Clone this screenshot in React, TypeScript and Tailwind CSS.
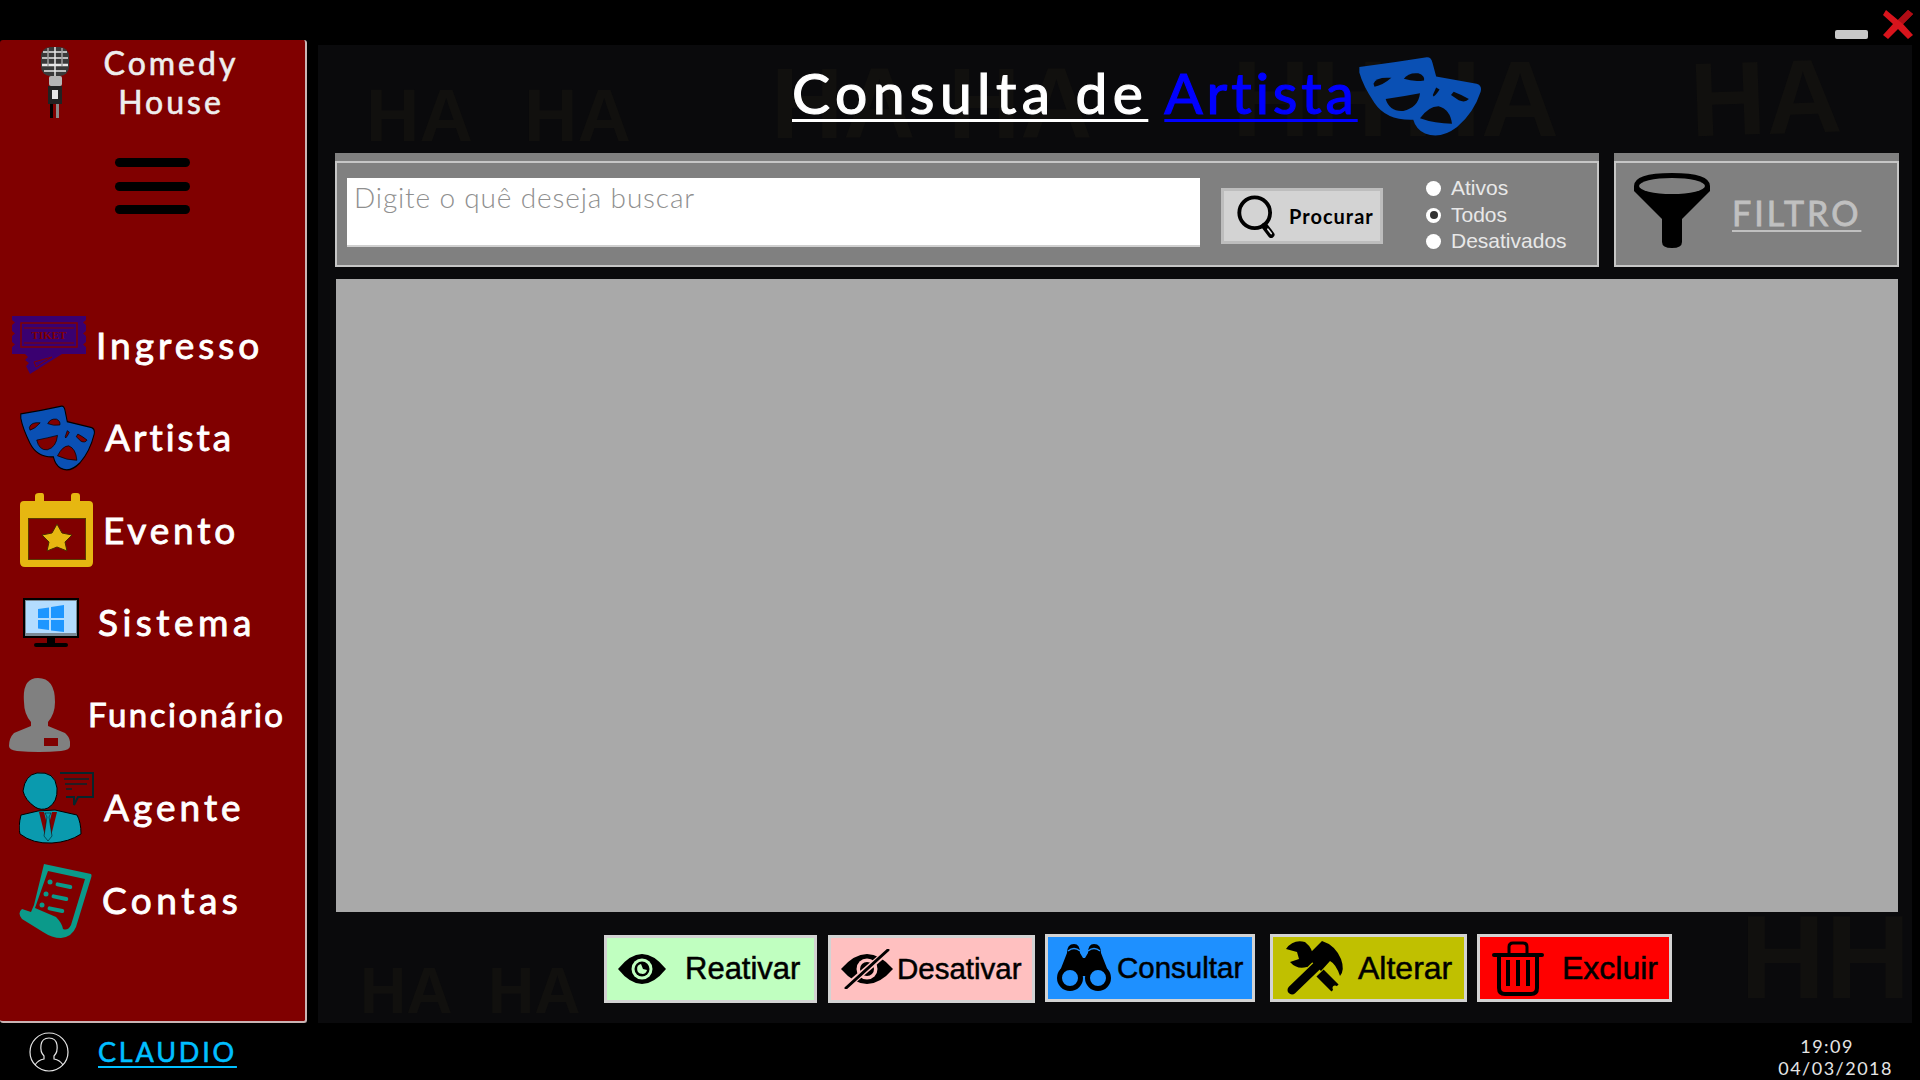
const display = "font-['Lato',sans-serif]";

function Masks({ className, hole, outline }: { className: string; hole: string; outline?: boolean }) {
  return (
    <svg viewBox="26 14 368 252" preserveAspectRatio="none" className={className} aria-hidden>
      <path
        d="M30 48Q130 35 230 18Q243 17 247 35L258 78L378 100Q395 105 390 125Q370 190 320 235Q270 275 225 255Q198 242 190 212Q110 215 75 160Q40 105 30 65Z"
        fill="#0a50b4"
        stroke={outline ? "#000" : "none"}
        strokeWidth="5"
      />
      <g fill={hole} stroke={outline ? "#000" : "none"} strokeWidth="3">
        <path d="M72 100Q80 78 125 82Q100 105 75 110Z" />
        <path d="M162 85Q175 65 205 68Q225 75 222 90Q190 95 162 85Z" />
        <path d="M108 148Q160 140 210 130Q205 175 160 185Q120 188 108 148Z" />
        <path d="M248 135L258 112L268 118Q258 135 250 140Z" />
        <path d="M302 135L310 125Q335 135 355 148Q345 160 325 152Z" />
        <path d="M210 208Q235 170 265 170Q300 180 305 225Q255 225 210 208Z" />
      </g>
    </svg>
  );
}

function Mic() {
  return (
    <svg viewBox="0 0 30 72" className="h-[72px] w-[30px]" aria-hidden>
      <rect x="1" y="1" width="28" height="29" rx="9" fill="#3a3a3a" />
      <g stroke="#e8e8e8" strokeWidth="1.500">
        <path d="M3 6H27M2 12H28M4 25H26M15 1V30" />
        <path d="M2 19H28" strokeWidth="2.500" />
        <path d="M8 2V20M22 2V20" stroke="#a0a0a0" />
      </g>
      <rect x="9" y="30" width="13" height="10" rx="2" fill="#b5b5b5" />
      <rect x="8" y="40" width="14" height="18" fill="#222" />
      <rect x="12" y="44" width="6" height="9" fill="#e6e6e6" />
      <rect x="10" y="58" width="3" height="14" fill="#000" />
      <rect x="16" y="58" width="3" height="14" fill="#8a8a8a" />
    </svg>
  );
}

function Ticket() {
  return (
    <svg viewBox="0 0 74 58" className="h-[58px] w-[74px]" aria-hidden>
      <path
        d="M0 0H74V4L71 6.500L74 9V15L71 17.500L74 20V26L71 28.500L74 31V38H50L18 58L14 50L17 47L13 44L16 41L13 38H0V31L3 28.500L0 26V20L3 17.500L0 15V9L3 6.500L0 4Z"
        fill="#3a0070"
      />
      <rect x="9" y="7" width="56" height="24" fill="none" stroke="#800000" strokeWidth="1.500" />
      <path d="M12 12H62M12 27H62" stroke="#800000" strokeWidth="1" />
      <text x="37" y="23" textAnchor="middle" fontSize="11" fontWeight="700" fontFamily="Liberation Serif, serif" fill="#800000">
        TIKET
      </text>
      <path d="M22 46L40 41L24 51Z" fill="none" stroke="#800000" strokeWidth="1" />
    </svg>
  );
}

function Calendar() {
  return (
    <svg viewBox="0 0 74 74" className="h-[74px] w-[74px]" aria-hidden>
      <path
        d="M15 8V3Q15 0 19 0H22Q24 0 24 3V8H51V3Q51 0 54 0H57Q60 0 60 3V8H69Q73 8 73 12V69Q73 74 68 74H5Q0 74 0 69V12Q0 8 4 8Z"
        fill="#e6b711"
      />
      <rect x="8.500" y="25.500" width="57" height="41" fill="#800000" stroke="#5a3a00" strokeWidth="1" />
      <path
        d="M37 31L42 40L52 42L45 49L47 58L37 54L27 58L29 49L22 42L32 40Z"
        fill="#e6b711"
        stroke="#4a2a00"
        strokeWidth="1"
        strokeLinejoin="round"
      />
    </svg>
  );
}

function Monitor() {
  return (
    <svg viewBox="0 0 56 49" className="h-[49px] w-[56px]" aria-hidden>
      <rect x="0" y="0" width="56" height="40" fill="#000" />
      <rect x="2" y="2" width="52" height="36" fill="#7a8a96" />
      <rect x="3" y="3" width="50" height="32" fill="#b3dcff" />
      <path d="M15 11L26 9.500V20H15ZM28 9L41 7V20H28ZM15 22H26V32L15 30.500ZM28 22H41V34L28 32.500Z" fill="#1e96ff" />
      <rect x="24" y="40" width="8" height="5" fill="#000" />
      <rect x="11" y="45" width="34" height="4" rx="2" fill="#000" />
    </svg>
  );
}

function Employee() {
  return (
    <svg viewBox="0 0 61 74" className="h-[74px] w-[61px]" aria-hidden>
      <path
        d="M15 24Q13 0 29 0Q46 0 46 24Q46 36 39 44V48L56 55Q62 60 61 68Q61 72 52 73Q30 75 8 73Q0 72 0 68Q0 60 5 55L22 48V44Q15 36 15 24Z"
        fill="#808080"
      />
      <rect x="35" y="60" width="14" height="8" fill="#800000" />
    </svg>
  );
}

function Agent() {
  return (
    <svg viewBox="0 0 75 72" className="h-[72px] w-[75px]" aria-hidden>
      <path d="M41 1H74V25H59L55 33V25H47" fill="#800000" stroke="#06262c" strokeWidth="2" />
      <path d="M45 7H70M46 12H68M47 17H53" stroke="#06262c" strokeWidth="1.500" />
      <path d="M18 1Q36 -1 38 16Q39 30 29 36Q22 39 16 35Q6 28 4 19Q6 3 18 1Z" fill="#0a9aae" stroke="#000" strokeWidth="1" />
      <path d="M19 39L2 43Q-1 55 1 62Q14 72 33 71Q50 70 62 62Q62 50 58 43L36 38Z" fill="#0a9aae" stroke="#000" strokeWidth="1" />
      <path d="M20 40L26 64L32 64L38 40L33 40L29 56L25 40Z" fill="#800000" />
      <path d="M26 41H32L30 45L33 64L29 69L25 64L28 45Z" fill="#0a9aae" stroke="#000" strokeWidth="0.500" />
    </svg>
  );
}

function Bill() {
  return (
    <svg viewBox="0 0 74 75" className="h-[75px] w-[74px]" aria-hidden>
      <path d="M26 1L73 11Q74 12 73 15L58 64Q54 74 43 75Q34 75 25 69L4 56Q-1 50 4 46L13 49L16 42Z" fill="#0b9a8a" />
      <path d="M30 8L67 16L53 62Q50 68 45 66Q44 60 38 54L17 45Z" fill="#800000" />
      <g fill="#0b9a8a">
        <circle cx="32" cy="19" r="2.500" />
        <circle cx="28" cy="31" r="2.500" />
        <circle cx="24" cy="42" r="2.500" />
        <rect x="38" y="19" width="17" height="4" rx="2" transform="rotate(12 38 19)" />
        <rect x="34" y="31" width="17" height="4" rx="2" transform="rotate(12 34 31)" />
        <rect x="30" y="43" width="17" height="4" rx="2" transform="rotate(12 30 43)" />
      </g>
    </svg>
  );
}

function UserRing() {
  return (
    <svg viewBox="0 0 40 40" className="h-[40px] w-[40px]" fill="none" stroke="#e5e5e5" strokeWidth="1.200" aria-hidden>
      <circle cx="20" cy="20" r="19" />
      <path d="M6 33Q9 28 15 27V24Q11 20 12 13Q13 6 20 6Q27 6 28 13Q29 20 25 24V27Q31 28 34 33" />
    </svg>
  );
}

function SearchGlass() {
  return (
    <svg viewBox="0 0 40 40" className="h-[44px] w-[44px]" fill="none" aria-hidden>
      <circle cx="17" cy="17" r="14" stroke="#000" strokeWidth="3.500" />
      <path d="M26 29L32 37" stroke="#000" strokeWidth="6" strokeLinecap="round" />
      <path d="M29 32L32 36" stroke="#ddd" strokeWidth="1.500" strokeLinecap="round" />
    </svg>
  );
}

function Funnel() {
  return (
    <svg viewBox="0 0 76 75" className="h-[75px] w-[76px]" aria-hidden>
      <path d="M0 13Q0 0 38 0Q76 0 76 13V18L48 46V69Q48 75 38 75Q28 75 28 69V46L0 18Z" fill="#000" />
      <ellipse cx="38" cy="13" rx="33" ry="8" fill="#808080" />
    </svg>
  );
}

function Eye() {
  return (
    <svg viewBox="0 0 48 30" className="h-[30px] w-[48px]" aria-hidden>
      <path d="M0 15Q12 0 24 0Q36 0 48 15Q36 30 24 30Q12 30 0 15Z" fill="#000" />
      <circle cx="24" cy="15" r="10.500" fill="#c0ffc0" />
      <circle cx="24" cy="15" r="7.500" fill="#000" />
      <path d="M23 10A5 5 0 1 0 29 16L25 15Z" fill="#c0ffc0" />
    </svg>
  );
}

function EyeOff() {
  return (
    <svg viewBox="0 0 52 40" className="h-[40px] w-[52px]" aria-hidden>
      <path d="M0 20Q13 5 26 5Q39 5 52 20Q39 35 26 35Q13 35 0 20Z" fill="#000" />
      <circle cx="26" cy="20" r="10.500" fill="#ffc0c0" />
      <circle cx="26" cy="20" r="7" fill="#000" />
      <path d="M5 38L47 2" stroke="#ffc0c0" strokeWidth="6" />
      <path d="M5 39L47 1" stroke="#000" strokeWidth="3" strokeLinecap="round" />
    </svg>
  );
}

function Binoculars() {
  return (
    <svg viewBox="0 0 56 48" className="h-[48px] w-[56px]" aria-hidden>
      <path d="M11 9Q11 0 18 0Q24 0 24 9L27 14H29L32 9Q32 0 38 0Q45 0 45 9L54 32H2Z" fill="#000" />
      <path d="M12 7Q18 2 24 7M32 7Q38 2 44 7" stroke="#1e90ff" strokeWidth="1.500" fill="none" />
      <circle cx="14" cy="34" r="10.500" fill="#1e90ff" stroke="#000" strokeWidth="5" />
      <circle cx="42" cy="34" r="10.500" fill="#1e90ff" stroke="#000" strokeWidth="5" />
    </svg>
  );
}

function Tools() {
  return (
    <svg viewBox="0 0 60 56" className="h-[56px] w-[60px]" aria-hidden>
      <path d="M20 2Q8 -1 1 9L12 12L14 19L5 22Q12 30 22 27L28 22Q30 10 20 2Z" fill="#000" />
      <path d="M24 22L50 48" stroke="#000" strokeWidth="10" />
      <circle cx="50" cy="48" r="2.500" fill="#c0c000" />
      <path d="M8 50L35 24" stroke="#c0c000" strokeWidth="13" />
      <path d="M7 50L35 23" stroke="#000" strokeWidth="9" strokeLinecap="round" />
      <path d="M27 11L37 1Q50 5 56 19Q60 30 55 36Q51 24 45 21L36 31L22 17Z" fill="#000" />
    </svg>
  );
}

function Trash() {
  return (
    <svg viewBox="0 0 52 56" className="h-[56px] w-[52px]" fill="none" stroke="#000" aria-hidden>
      <path d="M2 15H50" strokeWidth="4" strokeLinecap="round" />
      <path d="M17 14V7Q17 3 21 3H31Q35 3 35 7V14" strokeWidth="3" />
      <path d="M7 15V48Q7 54 13 54H39Q45 54 45 48V15" strokeWidth="4" />
      <path d="M16 20V46M26 20V46M36 20V46" strokeWidth="4" />
    </svg>
  );
}

const navItems = [
  { label: "Ingresso", icon: <Ticket />, row: "pl-[12px] gap-[10px]", text: "text-[37px] tracking-[4px]" },
  { label: "Artista", icon: <Masks className="h-[66px] w-[75px]" hole="#800000" outline />, row: "pl-[20px] gap-[10px]", text: "text-[37px] tracking-[3px]" },
  { label: "Evento", icon: <Calendar />, row: "pl-[20px] gap-[9px]", text: "text-[37px] tracking-[3.800px]" },
  { label: "Sistema", icon: <Monitor />, row: "pl-[23px] gap-[19px]", text: "text-[37px] tracking-[4.500px]" },
  { label: "Funcionário", icon: <Employee />, row: "pl-[9px] gap-[18px]", text: "text-[33px] tracking-[2.500px]" },
  { label: "Agente", icon: <Agent />, row: "pl-[19px] gap-[10px]", text: "text-[37px] tracking-[4px]" },
  { label: "Contas", icon: <Bill />, row: "pl-[18px] gap-[10px]", text: "text-[37px] tracking-[4.500px]" },
];

const radios = [
  { label: "Ativos", cls: "h-[28px]", checked: false },
  { label: "Todos", cls: "h-[26px]", checked: true },
  { label: "Desativados", cls: "h-[26px]", checked: false },
];

const actions = [
  { label: "Reativar", icon: <Eye />, box: "w-[213px] h-[68px] mt-[1px] bg-[#c0ffc0] pl-[11px]", text: "ml-[19px] text-[31px]" },
  { label: "Desativar", icon: <EyeOff />, box: "w-[207px] h-[68px] mt-[1px] ml-[11px] bg-[#ffc0c0] pl-[10px]", text: "ml-[4px] text-[29.500px]" },
  { label: "Consultar", icon: <Binoculars />, box: "w-[210px] h-[68px] ml-[10px] bg-[#1e90ff] pl-[8px]", text: "ml-[5px] text-[29.500px]" },
  { label: "Alterar", icon: <Tools />, box: "w-[197px] h-[68px] ml-[15px] bg-[#c0c000] pl-[12px]", text: "ml-[13px] text-[32px]" },
  { label: "Excluir", icon: <Trash />, box: "w-[195px] h-[68px] ml-[10px] bg-[#ff0000] pl-[12px]", text: "ml-[18px] text-[32px]" },
];

const laughs = [
  { text: "HA", cls: "left-[48px] top-[34px] text-[74px]" },
  { text: "HA", cls: "left-[206px] top-[34px] text-[74px]" },
  { text: "HA", cls: "left-[453px] top-[8px] text-[100px]" },
  { text: "HA", cls: "left-[630px] top-[8px] text-[100px]" },
  { text: "HH", cls: "left-[914px] top-0 text-[108px]" },
  { text: "HA", cls: "left-[1085px] top-0 text-[108px]" },
  { text: "HA", cls: "left-[1372px] top-0 text-[105px] -rotate-2" },
  { text: "HA", cls: "left-[42px] top-[914px] text-[64px]" },
  { text: "HA", cls: "left-[170px] top-[914px] text-[64px]" },
  { text: "HH", cls: "left-[1422px] top-[853px] text-[118px]" },
];

export default function App() {
  return (
    <div className={`h-[1080px] w-[1920px] overflow-hidden bg-black ${display}`}>
      <div className="flex h-[40px] items-start justify-end">
        <div className="mt-[30px] h-[9px] w-[33px] rounded-[2px] bg-[#c8c8c8]" />
        <svg viewBox="0 0 30 29" className="ml-[15px] mr-[7px] mt-[10px] h-[29px] w-[30px]" aria-hidden>
          <path d="M3 0L15 10L25 0L30 4L20 14L30 25L25 29L15 19L5 29L0 25L10 14L0 5Z" fill="#d8141c" />
          <path d="M15 10L25 0L30 4L20 14Z" fill="#b00c14" />
        </svg>
      </div>

      <div className="flex h-[983px]">
        <aside className="h-[983px] w-[307px] shrink-0 rounded-[3px] border-b-2 border-r-2 border-[#c9b4b4] bg-[#800000]">
          <div className="flex h-[80px] pl-[40px]">
            <div className="mt-[6px]">
              <Mic />
            </div>
            <div className="ml-[32px] mt-[3px] w-[138px] whitespace-nowrap text-center text-[32px] leading-[39px] tracking-[3px] text-[#eeeeee] [-webkit-text-stroke:0.6px_#eeeeee]">
              Comedy
              <br />
              House
            </div>
          </div>
          <div className="ml-[115px] mt-[38px] flex w-[75px] flex-col gap-[14.500px]">
            <div className="h-[9px] rounded-full bg-black" />
            <div className="h-[9px] rounded-full bg-black" />
            <div className="h-[9px] rounded-full bg-black" />
          </div>
          <nav className="mt-[85px]">
            {navItems.map((item) => (
              <div key={item.label} className={`flex h-[92.500px] items-center ${item.row}`}>
                {item.icon}
                <span className={`-mt-[2px] whitespace-nowrap text-white [-webkit-text-stroke:0.9px_white] ${item.text}`}>
                  {item.label}
                </span>
              </div>
            ))}
          </nav>
        </aside>

        <main className="relative ml-[11px] mt-[5px] h-[978px] w-[1594px] overflow-hidden bg-[#0a0a0c] pl-[17px]">
          {laughs.map((l, i) => (
            <span
              key={i}
              className={`absolute select-none font-['Liberation_Sans',sans-serif] font-bold leading-none text-[#11100e] ${l.cls}`}
            >
              {l.text}
            </span>
          ))}

          <div className="relative">
            <div className="flex h-[108px] items-start pl-[457px]">
              <h1 className="mt-[12px] whitespace-nowrap text-[57px] leading-[70px] tracking-[5.400px] text-white underline decoration-[3px] underline-offset-[5px] [-webkit-text-stroke:1.200px_white]">
                Consulta de
              </h1>
              <span className="ml-[16px] mt-[12px] whitespace-nowrap text-[57px] leading-[70px] tracking-[3.800px] text-[#0000ff] underline decoration-[3px] underline-offset-[5px] [-webkit-text-stroke:1.200px_#0000ff]">
                Artista
              </span>
              <Masks className="mt-[11px] h-[81px] w-[124px]" hole="#0a0a0c" />
            </div>

            <div className="flex gap-[15px]">
              <div className="h-[114px] w-[1264px] bg-[#808080] pt-[8px]">
                <div className="flex h-[106px] items-start border-2 border-[#c6c6c6] pl-[10px] pt-[15px]">
                  <textarea
                    readOnly
                    placeholder="Digite o quê deseja buscar"
                    className="h-[69px] w-[853px] resize-none border-b-2 border-[#d0d0d0] bg-white px-[7px] py-[2px] font-['Lato',sans-serif] text-[28px] font-light leading-[34px] tracking-[0.850px] text-black outline-none placeholder:text-[#8f8f8f]"
                  />
                  <button className="ml-[21px] mt-[10px] flex h-[56px] w-[162px] items-center border-[3px] border-[#bdbdbd] bg-[#d3d3d3] pl-[12px] text-black">
                    <SearchGlass />
                    <span className="ml-[9px] text-[20px] font-bold tracking-[1px]">Procurar</span>
                  </button>
                  <div className="ml-[43px] mt-[-4px] flex flex-col">
                    {radios.map((r) => (
                      <div
                        key={r.label}
                        className={`flex items-center font-['Liberation_Sans',sans-serif] text-[21px] text-[#e8e8e8] ${r.cls}`}
                      >
                        <span className="flex h-[15px] w-[15px] items-center justify-center rounded-full bg-white">
                          {r.checked && <span className="h-[8px] w-[8px] rounded-full bg-[#333333]" />}
                        </span>
                        <span className="ml-[10px]">{r.label}</span>
                      </div>
                    ))}
                  </div>
                </div>
              </div>

              <div className="h-[114px] w-[285px] bg-[#808080] pt-[8px]">
                <div className="flex h-[106px] items-start border-2 border-[#c6c6c6] pl-[18px] pt-[10px]">
                  <Funnel />
                  <span className="ml-[22px] mt-[18px] text-[34px] leading-[44px] tracking-[3px] text-[#c0c0c0] underline decoration-2 underline-offset-[4px] [-webkit-text-stroke:0.8px_#c0c0c0]">
                    FILTRO
                  </span>
                </div>
              </div>
            </div>

            <div className="ml-[1px] mt-[12px] h-[633px] w-[1562px] bg-[#a9a9a9]" />

            <div className="ml-[269px] mt-[22px] flex items-start">
              {actions.map((a) => (
                <button
                  key={a.label}
                  className={`flex items-center border-[3px] border-[#d3d3d3] font-['Liberation_Sans',sans-serif] text-black ${a.box}`}
                >
                  {a.icon}
                  <span className={`[-webkit-text-stroke:0.5px_black] ${a.text}`}>{a.label}</span>
                </button>
              ))}
            </div>
          </div>
        </main>
      </div>

      <footer className="flex h-[57px] items-center">
        <div className="ml-[29px]">
          <UserRing />
        </div>
        <span className="ml-[29px] mt-[2px] text-[27px] tracking-[2.800px] text-[#00bfff] underline decoration-2 underline-offset-[4px] [-webkit-text-stroke:0.6px_#00bfff]">
          CLAUDIO
        </span>
        <div className="ml-auto mt-[11px] flex flex-col items-end pr-[27px] text-[18px] leading-[22px] tracking-[1.500px] text-[#e5e5e5]">
          <span className="pr-[39px]">19:09</span>
          <span>04/03/2018</span>
        </div>
      </footer>
    </div>
  );
}
